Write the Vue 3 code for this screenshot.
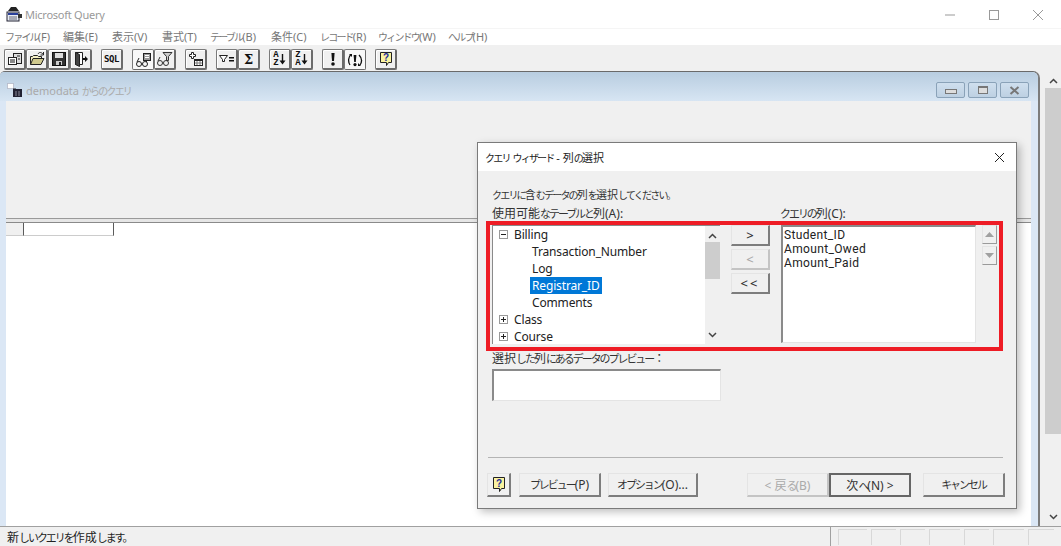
<script setup>
import { h } from 'vue'

const menus = [
  { label: 'ファイル(F)', w: 58 }, { label: '編集(E)', w: 49 }, { label: '表示(V)', w: 50 },
  { label: '書式(T)', w: 48 }, { label: 'テーブル(B)', w: 61 }, { label: '条件(C)', w: 49 },
  { label: 'レコード(R)', w: 58 }, { label: 'ウィンドウ(W)', w: 70 }, { label: 'ヘルプ(H)', w: 50 }
]
const panels = [29, 25, 25, 31, 25, 31, 26]

/* Kana are set narrower than kanji and latin, as the proportional UI font does. */
const Jp = (props) =>
  (props.t.match(/[\u3040-\u30ff。、]+|[^\u3040-\u30ff。、]+/g) || []).map((run) =>
    h('span', { class: /^[\u3040-\u30ff。、]/.test(run) ? 'kana' : undefined }, run)
  )
Jp.props = ['t']
</script>

<template>
  <div class="app">
    <header class="titlebar">
      <svg class="app-icon" width="17" height="16" viewBox="0 0 17 16">
        <path d="M2 5 5 1h5l3 4z" fill="#222" />
        <rect x="1" y="6" width="12" height="9" fill="#e8ecf4" stroke="#223" />
        <rect x="2" y="7" width="10" height="2" fill="#2a3f9a" />
        <rect x="12" y="8" width="4" height="4" fill="#333" />
        <path d="M3 11h8M3 13h8" stroke="#667" />
      </svg>
      <span class="app-title">Microsoft Query</span>
      <div class="win-controls">
        <svg width="12" height="12" viewBox="0 0 12 12"><path d="M1 6h10" stroke="#999" /></svg>
        <svg width="12" height="12" viewBox="0 0 12 12"><rect x="1.5" y="1.5" width="9" height="9" fill="none" stroke="#999" /></svg>
        <svg width="12" height="12" viewBox="0 0 12 12"><path d="M1 1l10 10M11 1 1 11" stroke="#999" /></svg>
      </div>
    </header>

    <nav class="menubar">
      <span v-for="m in menus" :key="m.label" class="menu-item" :style="{ width: m.w + 'px' }"><Jp :t="m.label" /></span>
    </nav>

    <div class="toolbar">
      <div class="tb-group">
        <button class="tb">
          <svg width="16" height="16" viewBox="0 0 16 16"><rect x="6.5" y="2.5" width="8" height="10" fill="#ddd" stroke="#222" /><rect x="1.5" y="6.5" width="8" height="7" fill="#fff" stroke="#222" /><rect x="3" y="8" width="5" height="4" fill="#888" /><path d="M10 5h3M11 8h2" stroke="#222" /></svg>
        </button>
        <button class="tb">
          <svg width="16" height="16" viewBox="0 0 16 16"><path d="M1.5 13.5v-8h2l1-1h4l1 1h3v2" fill="#f3eec4" stroke="#222" /><path d="M1.5 13.5l2.5-6h11l-3 6z" fill="#cfc98e" stroke="#222" /><path d="M9 3c1-2 3-2 5 0" fill="none" stroke="#222" /><path d="M14.5 1v3h-3" fill="none" stroke="#222" /></svg>
        </button>
        <button class="tb">
          <svg width="16" height="16" viewBox="0 0 16 16"><rect x="1.5" y="1.5" width="13" height="13" fill="#333" stroke="#111" /><rect x="4" y="2" width="8" height="5" fill="#ddd" /><rect x="5" y="10" width="6" height="4" fill="#ccc" /><rect x="8" y="11" width="2" height="3" fill="#222" /></svg>
        </button>
        <button class="tb">
          <svg width="16" height="16" viewBox="0 0 16 16"><path d="M2.5 1.5h7v12h-7z" fill="#fff" stroke="#222" /><path d="M2.5 1.5l4 2v12l-4-2z" fill="#444" stroke="#222" /><path d="M10 7h2V5l3 3-3 3V9h-2z" fill="#111" /></svg>
        </button>
      </div>
      <div class="tb-group">
        <button class="tb"><span class="sql">SQL</span></button>
      </div>
      <div class="tb-group">
        <button class="tb pressed">
          <svg width="17" height="16" viewBox="0 0 17 16"><rect x="8.5" y="1.5" width="7" height="7" fill="#999" stroke="#222" /><path d="M10 3.5h4M10 5.5h4" stroke="#fff" /><circle cx="4" cy="12" r="2.5" fill="none" stroke="#222" /><circle cx="10" cy="12" r="2.5" fill="none" stroke="#222" /><path d="M6.5 12h1M2 10l2-4M12 10l-1-1" stroke="#222" fill="none" /></svg>
        </button>
        <button class="tb">
          <svg width="17" height="16" viewBox="0 0 17 16"><path d="M7 1.5h9l-3.5 4v4h-2v-4z" fill="#ccc" stroke="#333" /><circle cx="4" cy="12" r="2.5" fill="none" stroke="#333" /><circle cx="10" cy="12" r="2.5" fill="none" stroke="#333" /><path d="M6.5 12h1M2 10l2-4" stroke="#333" fill="none" /></svg>
        </button>
      </div>
      <div class="tb-group">
        <button class="tb">
          <svg width="16" height="16" viewBox="0 0 16 16"><path d="M3.5 1.5h2v2h2v2h-2v2h-2v-2h-2v-2h2z" fill="#fff" stroke="#222" /><rect x="6.5" y="8.5" width="8" height="6" fill="#fff" stroke="#222" /><rect x="7" y="9" width="7" height="1" fill="#222" /><path d="M7 12h7M9 10v4M12 10v4" stroke="#777" /></svg>
        </button>
      </div>
      <div class="tb-group">
        <button class="tb">
          <svg width="17" height="16" viewBox="0 0 17 16"><path d="M1.5 4.5h8l-3 4v2h-2v-2z" fill="#fff" stroke="#222" /><path d="M11 6h5v1.6h-5zM11 9h5v1.6h-5z" fill="#111" /></svg>
        </button>
        <button class="tb"><span class="sigma">Σ</span></button>
      </div>
      <div class="tb-group">
        <button class="tb">
          <span class="sort"><span>A</span><span>Z</span></span>
          <svg class="sort-arrow" width="7" height="13" viewBox="0 0 7 13"><path d="M3.5 1v7" stroke="#111" stroke-width="1.4" /><path d="M0.5 7.5h6l-3 4z" fill="#111" /></svg>
        </button>
        <button class="tb">
          <span class="sort"><span>Z</span><span>A</span></span>
          <svg class="sort-arrow" width="7" height="13" viewBox="0 0 7 13"><path d="M3.5 1v7" stroke="#111" stroke-width="1.4" /><path d="M0.5 7.5h6l-3 4z" fill="#111" /></svg>
        </button>
      </div>
      <div class="tb-group">
        <button class="tb">
          <svg width="16" height="16" viewBox="0 0 16 16"><path d="M6.4 2h3.2L9 10H7z" fill="#111" /><circle cx="8" cy="13" r="1.8" fill="#111" /></svg>
        </button>
        <button class="tb pressed">
          <svg width="18" height="16" viewBox="0 0 18 16"><path d="M7.6 3h2.8L9.8 10H8.2z" fill="#111" /><circle cx="9" cy="12.6" r="1.6" fill="#111" /><path d="M5 2.5C2 5 2 10 4 13M13 3c3 3 3 7 1 10" fill="none" stroke="#111" stroke-width="1.3" /><path d="M3 2h3v3zM15 14h-3v-3z" fill="#111" /></svg>
        </button>
      </div>
      <div class="tb-group">
        <button class="tb">
          <svg width="16" height="16" viewBox="0 0 16 16"><path d="M2.5 1.5h11v10h-3l-2 3v-3h-6z" fill="#fbf3a0" stroke="#222" /><text class="q-mark" x="8" y="10">?</text></svg>
        </button>
      </div>
    </div>

    <main class="mdi">
      <section class="child">
        <div class="child-title">
          <svg class="child-icon" width="16" height="15" viewBox="0 0 16 15"><rect x="0.5" y="0.5" width="6" height="5" fill="#fff" stroke="#99a" stroke-dasharray="1 1" /><path d="M6 6h3" stroke="#222" /><rect x="6" y="6" width="9" height="8" fill="#223" /><path d="M9 8v5M12 8v5" stroke="#889" /></svg>
          <span class="child-caption"><Jp t="demodata からのクエリ" /></span>
          <div class="child-btns">
            <span class="cbtn"><i class="glyph-min"></i></span>
            <span class="cbtn"><i class="glyph-max"></i></span>
            <span class="cbtn">
              <svg width="11" height="9" viewBox="0 0 11 9"><path d="M1.5 1 9.5 8M9.5 1l-8 7" stroke="#777" stroke-width="2" /></svg>
            </span>
          </div>
        </div>
        <div class="child-inner">
          <div class="upper-pane"></div>
          <div class="splitter"></div>
          <div class="grid-pane">
            <div class="grid-head">
              <span class="hcell-a"></span>
              <span class="hcell-b"></span>
            </div>
          </div>
        </div>
      </section>
      <div class="mdi-gap"></div>
      <aside class="vscroll">
        <svg class="chev top" width="9" height="6" viewBox="0 0 9 6"><path d="M1 5l3.5-3.5L8 5" fill="none" stroke="#444" stroke-width="1.5" /></svg>
        <div class="vthumb"></div>
        <svg class="chev" width="9" height="6" viewBox="0 0 9 6"><path d="M1 1l3.5 3.5L8 1" fill="none" stroke="#444" stroke-width="1.5" /></svg>
      </aside>
    </main>

    <footer class="statusbar">
      <span class="status-text"><Jp t="新しいクエリを作成します。" /></span>
      <div class="status-panels">
        <span v-for="(p, i) in panels" :key="i" class="panel" :style="{ width: p + 'px' }"></span>
      </div>
    </footer>

    <div class="dialog">
      <div class="dlg-title">
        <span><Jp t="クエリ ウィザード - 列の選択" /></span>
        <svg width="11" height="11" viewBox="0 0 11 11"><path d="M1 1l9 9M10 1l-9 9" stroke="#222" /></svg>
      </div>
      <div class="dlg-body">
        <p class="line prompt"><Jp t="クエリに含むデータの列を選択してください。" /></p>
        <div class="labels">
          <span class="line big label-left"><Jp t="使用可能なテーブルと列(A):" /></span>
          <span class="line big"><Jp t="クエリの列(C):" /></span>
        </div>
        <div class="columns">
          <div class="tree">
            <div class="tree-rows">
              <div class="row"><span class="box"><i class="h"></i></span>Billing</div>
              <div class="row sub">Transaction_Number</div>
              <div class="row sub">Log</div>
              <div class="row sub"><span class="selected">Registrar_ID</span></div>
              <div class="row sub">Comments</div>
              <div class="row"><span class="box"><i class="h"></i><i class="v"></i></span>Class</div>
              <div class="row last"><span class="box"><i class="h"></i><i class="v"></i></span>Course</div>
            </div>
            <div class="tree-scroll">
              <svg width="9" height="6" viewBox="0 0 9 6"><path d="M1 5l3.5-3.5L8 5" fill="none" stroke="#444" stroke-width="1.5" /></svg>
              <div class="tree-thumb"></div>
              <svg class="tree-down" width="9" height="6" viewBox="0 0 9 6"><path d="M1 1l3.5 3.5L8 1" fill="none" stroke="#444" stroke-width="1.5" /></svg>
            </div>
          </div>
          <div class="mid-btns">
            <button class="btn mid">&gt;</button>
            <button class="btn mid disabled">&lt;</button>
            <button class="btn mid wide">&lt;&lt;</button>
          </div>
          <div class="qlist">
            <div class="qrow">Student_ID</div>
            <div class="qrow">Amount_Owed</div>
            <div class="qrow">Amount_Paid</div>
          </div>
          <div class="spins">
            <button class="spin"><svg width="9" height="5" viewBox="0 0 9 5"><path d="M4.5 0 9 5H0z" fill="#a0a0a0" /></svg></button>
            <button class="spin"><svg width="9" height="5" viewBox="0 0 9 5"><path d="M0 0h9L4.5 5z" fill="#a0a0a0" /></svg></button>
          </div>
        </div>
        <p class="line big preview-label"><Jp t="選択した列にあるデータのプレビュー：" /></p>
        <div class="preview-box"></div>
        <div class="sep"></div>
        <div class="footer">
          <button class="btn help">
            <svg width="16" height="17" viewBox="0 0 16 17"><path d="M2.5 1.5h11v11h-3l-2 3v-3h-6z" fill="#fbf3a0" stroke="#222" /><text class="q-mark" x="8" y="10.5">?</text></svg>
          </button>
          <button class="btn w82 ml8"><Jp t="プレビュー(P)" /></button>
          <button class="btn w90 ml7"><Jp t="オプション(O)..." /></button>
          <button class="btn w82 ml49 disabled"><Jp t="&lt; 戻る(B)" /></button>
          <button class="btn w82 default"><Jp t="次へ(N) &gt;" /></button>
          <button class="btn w82 ml12"><Jp t="キャンセル" /></button>
        </div>
      </div>
    </div>

    <div class="highlight"></div>
  </div>
</template>

<style>
html, body { margin: 0; overflow: hidden; background: #fff; }
.kana { font-size: 0.91em; letter-spacing: -0.18em; }
</style>

<style scoped>
.app {
  position: relative;
  width: 1061px;
  height: 546px;
  display: flex;
  flex-direction: column;
  overflow: hidden;
  font-family: "Noto Sans", "Noto Sans CJK JP", sans-serif;
  font-size: 12px;
  color: #333;
  background: #fff;
}
button { font-family: inherit; padding: 0; margin: 0; }

.titlebar { height: 28px; display: flex; align-items: center; padding-left: 6px; flex: none; }
.app-icon { margin-right: 2px; }
.app-title { color: #999; font-size: 11px; letter-spacing: -0.25px; }
.win-controls { margin-left: auto; display: flex; gap: 32px; padding-right: 17px; padding-top: 1px; }
.win-controls svg { display: block; }

.menubar { height: 17px; display: flex; padding-left: 5px; flex: none; border-top: 1px solid #f5f5f5; box-sizing: border-box; }
.menu-item { font-size: 11px; line-height: 16px; color: #777; white-space: nowrap; }

.toolbar {
  height: 26px;
  flex: none;
  background: #f0f0f0;
  display: flex;
  gap: 9px;
  padding: 4px 0 0 4px;
  box-sizing: border-box;
}
.tb-group { display: flex; }
.tb {
  width: 22px;
  height: 21px;
  box-sizing: border-box;
  background: #f0f0f0;
  border: 1px solid #7a7a7a;
  border-bottom: 2px solid #6b6b6b;
  border-right: 2px solid #6b6b6b;
  border-radius: 2px;
  box-shadow: inset 1px 1px 0 #fff;
  display: flex;
  align-items: center;
  justify-content: center;
  overflow: hidden;
}
.tb.pressed { background: #f8f8f8; border-bottom-width: 1px; border-right-width: 1px; box-shadow: none; }
.tb svg { display: block; flex: none; }
.sql { font: bold 9px/1 "DejaVu Sans Mono", monospace; color: #111; letter-spacing: -0.5px; }
.sigma { font: bold 13px/1 "DejaVu Serif", serif; color: #111; }
.sort { display: flex; flex-direction: column; font: bold 9px/8px "Liberation Mono", monospace; color: #111; }
.q-mark { font: bold 10px "Liberation Sans", sans-serif; fill: #1a2a9a; text-anchor: middle; }

.mdi { flex: 1; display: flex; min-height: 0; background: #f0f0f0; }
.child {
  width: 1038px;
  flex: none;
  display: flex;
  flex-direction: column;
  background: #dbe7f5;
  border-top: 1px solid #6a6a6a;
  border-right: 2px solid #7c7c7c;
  border-radius: 5px 7px 0 0;
}
.child-title {
  height: 29px;
  flex: none;
  box-sizing: border-box;
  display: flex;
  align-items: center;
  padding: 7px 0 0 7px;
  background: linear-gradient(#b8cde0, #d7e5f3);
  border-radius: 4px 6px 0 0;
}
.child-icon { margin-right: 3px; }
.child-caption { color: #aaa; font-size: 11px; }
.child-btns { margin-left: auto; display: flex; gap: 3px; padding-right: 9px; }
.cbtn {
  width: 29px;
  height: 16px;
  box-sizing: border-box;
  border: 1px solid #8aa2b8;
  border-radius: 2px;
  background: linear-gradient(#cfdfee, #bdd0e2);
  display: flex;
  align-items: center;
  justify-content: center;
}
.glyph-min { width: 10px; height: 3px; background: #ddd; border: 1px solid #777; margin-top: 3px; }
.glyph-max { width: 8px; height: 5px; border: 1px solid #777; border-top-width: 2px; background: #ddd; }

.child-inner { flex: 1; margin: 0 7px 0 6px; display: flex; flex-direction: column; min-height: 0; background: #fff; }
.upper-pane { height: 117px; background: #f0f0f0; flex: none; }
.splitter { height: 5px; flex: none; box-sizing: border-box; background: #e6e6e6; border-top: 1px solid #9a9a9a; border-bottom: 1px solid #8a8a8a; }
.grid-pane { flex: 1; background: #fff; }
.grid-head { display: flex; height: 13px; }
.hcell-a { width: 18px; box-sizing: border-box; background: #f0f0f0; border-right: 1px solid #5a5a5a; border-bottom: 1px solid #ccc; }
.hcell-b { width: 90px; box-sizing: border-box; background: #fff; border-right: 1px solid #5a5a5a; border-bottom: 1px solid #ccc; }

.mdi-gap { width: 5px; flex: none; }
.vscroll { width: 16px; flex: none; display: flex; flex-direction: column; align-items: center; background: #f0f0f0; }
.chev { flex: none; margin-bottom: 6px; }
.chev.top { margin: 7px 0 4px; }
.vthumb { width: 16px; height: 346px; background: #cdcdcd; margin-bottom: 80px; }

.statusbar {
  height: 20px;
  flex: none;
  box-sizing: border-box;
  background: #f0f0f0;
  border-top: 1px solid #a0a0a0;
  display: flex;
  align-items: center;
  padding-left: 7px;
}
.status-text { color: #222; }
.status-panels {
  margin-left: auto;
  width: 231px;
  align-self: stretch;
  box-sizing: border-box;
  border-left: 1px solid #a0a0a0;
  display: flex;
  gap: 4px;
  padding: 2px 0 1px 7px;
}
.panel { box-sizing: border-box; border-top: 1px solid #d8d8d8; border-left: 1px solid #d8d8d8; }

.dialog {
  position: absolute;
  left: 477px;
  top: 142px;
  width: 540px;
  height: 367px;
  box-sizing: border-box;
  background: #f0f0f0;
  border: 1px solid #7a7a7a;
  box-shadow: 3px 3px 8px rgba(0, 0, 0, 0.25);
  display: flex;
  flex-direction: column;
}
.dlg-title {
  height: 28px;
  flex: none;
  background: #fff;
  display: flex;
  align-items: center;
  justify-content: space-between;
  padding: 0 11px 0 7px;
  font-size: 11px;
  color: #222;
}
.dlg-body { flex: 1; padding: 16px 0 0 14px; min-height: 0; }
.line { margin: 0; font-size: 11px; line-height: 16px; height: 16px; color: #333; white-space: nowrap; }
.line.big { font-size: 12px; }
.prompt { margin-bottom: 3px; }
.labels { display: flex; height: 19px; }
.label-left { width: 288px; }
.columns { display: flex; height: 119px; align-items: flex-start; }

.tree {
  width: 228px;
  height: 119px;
  box-sizing: border-box;
  background: #fff;
  border-top: 1px solid #8a8a8a;
  border-left: 1px solid #8a8a8a;
  display: flex;
  flex: none;
  overflow: hidden;
}
.tree-rows { flex: 1; min-width: 0; letter-spacing: -0.15px; }
.row { height: 17px; line-height: 17px; display: flex; align-items: center; padding-left: 6px; white-space: nowrap; color: #222; }
.row.last { height: 16px; }
.row.sub { padding-left: 39px; }
.selected { background: #0078d7; color: #fff; margin-left: -2px; padding: 0 2px; height: 17px; }
.box { width: 9px; height: 9px; box-sizing: border-box; border: 1px solid #999; margin-right: 6px; position: relative; flex: none; }
.box .h { position: absolute; left: 1px; top: 3px; width: 5px; height: 1px; background: #222; }
.box .v { position: absolute; left: 3px; top: 1px; width: 1px; height: 5px; background: #222; }
.tree-scroll {
  width: 15px;
  flex: none;
  background: #f0f0f0;
  display: flex;
  flex-direction: column;
  align-items: center;
  padding-top: 7px;
  box-sizing: border-box;
}
.tree-scroll svg { flex: none; display: block; }
.tree-thumb { width: 15px; height: 37px; background: #cdcdcd; margin: 3px 0 53px; flex: none; }

.mid-btns { display: flex; flex-direction: column; gap: 3px; margin-left: 11px; flex: none; }
.qlist {
  width: 195px;
  height: 118px;
  flex: none;
  margin-left: 11px;
  box-sizing: border-box;
  background: #fff;
  border-top: 2px solid #8a8a8a;
  border-left: 2px solid #8a8a8a;
  border-right: 1px solid #e4e4e4;
  border-bottom: 1px solid #e4e4e4;
  padding: 1px 0 0 1px;
  color: #222;
}
.qrow { height: 14px; font: 12px/14px Roboto, sans-serif; letter-spacing: 0.35px; }
.spins { margin-left: 6px; display: flex; flex-direction: column; gap: 2px; flex: none; }
.spin {
  width: 15px;
  height: 19px;
  box-sizing: border-box;
  background: #f0f0f0;
  border: 1px solid #e4e4e4;
  border-right: 1px solid #9a9a9a;
  border-bottom: 1px solid #9a9a9a;
  display: flex;
  align-items: center;
  justify-content: center;
}

.btn {
  height: 24px;
  box-sizing: border-box;
  background: #f0f0f0;
  border: 1px solid #e4e4e4;
  border-right: 2px solid #7d7d7d;
  border-bottom: 2px solid #7d7d7d;
  font-size: 12px;
  color: #333;
  white-space: nowrap;
  flex: none;
}
.btn.mid { width: 39px; height: 21px; line-height: 16px; font-size: 13px; font-weight: 500; }
.btn.wide { letter-spacing: 2px; }
.btn.disabled { color: #aaa; border-right-color: #c4c4c4; border-bottom-color: #c4c4c4; }
.btn.default { border: 2px solid #666; }
.w82 { width: 82px; }
.w90 { width: 90px; }
.ml7 { margin-left: 7px; }
.ml8 { margin-left: 8px; }
.ml12 { margin-left: 12px; }
.ml49 { margin-left: 49px; }
.help { width: 24px; display: flex; align-items: center; justify-content: center; }
.help svg { display: block; }

.preview-label { margin-top: 7px; }
.preview-box {
  width: 229px;
  height: 32px;
  margin-top: 2px;
  box-sizing: border-box;
  background: #fff;
  border-top: 2px solid #8a8a8a;
  border-left: 2px solid #8a8a8a;
  border-right: 1px solid #e4e4e4;
  border-bottom: 1px solid #e4e4e4;
}
.sep { width: 515px; height: 1px; margin: 56px 0 0 -4px; background: #b4b4b4; }
.footer { display: flex; margin: 15px 0 0 -5px; }

.highlight {
  position: absolute;
  left: 486px;
  top: 221px;
  width: 517px;
  height: 130px;
  box-sizing: border-box;
  border: 4px solid #ee1c25;
  pointer-events: none;
}
</style>
